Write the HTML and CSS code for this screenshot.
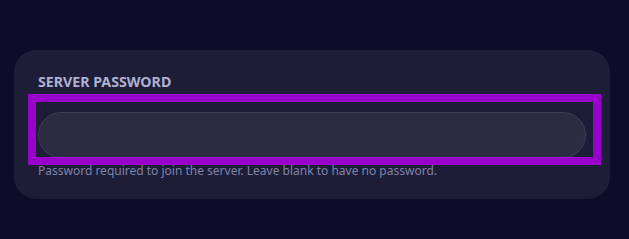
FILE: index.html
```html
<!DOCTYPE html>
<html lang="en">
<head>
  <meta charset="UTF-8">
  <meta name="viewport" content="width=device-width, initial-scale=1.0">
  <title>Server Settings</title>
  <link rel="stylesheet" href="styles.css">
</head>
<body>
  <div class="settings-card">
    <label class="field-label" for="server-password">SERVER PASSWORD</label>
    <div class="field-input-wrap">
      <input type="password" id="server-password" class="field-input">
      <div class="highlight-box"></div>
    </div>
    <div class="field-help">Password required to join the server. Leave blank to have no password.</div>
  </div>
</body>
</html>
```

FILE: styles.css
```css
body {
  margin: 0;
  padding: 50px 19px 40px 14px;
  background-color: #0c0c2b;
  font-family: "Noto Sans", "Open Sans", sans-serif;
}
.settings-card {
  display: flex;
  flex-direction: column;
  background-color: #1e1d38;
  border-radius: 22px;
  padding: 22px 24px 20px 24px;
}
.field-label {
  color: #aeb1d2;
  font-size: 14.2px;
  font-weight: bold;
  line-height: 19px;
  margin-bottom: 21px;
}
.field-input-wrap {
  position: relative;
}
.field-input {
  display: block;
  width: 100%;
  height: 46px;
  box-sizing: border-box;
  background-color: #2b2b41;
  border: 1px solid #3d3d58;
  border-radius: 23px;
  color: #d0d2e8;
  padding: 0 18px;
  outline: none;
}
.highlight-box {
  position: absolute;
  left: -10px;
  top: -18px;
  width: 573px;
  height: 71px;
  box-sizing: border-box;
  border: 8px solid #9900cc;
}
.field-help {
  color: #8083a8;
  font-size: 12px;
  line-height: 16px;
  margin-top: 5px;
}
```
